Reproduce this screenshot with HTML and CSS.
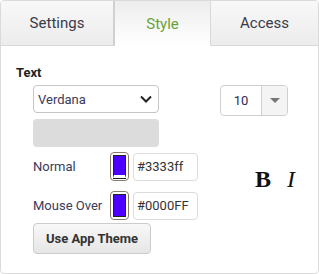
FILE: index.html
```html
<!DOCTYPE html>
<html>

<head>
    <meta charset="UTF-8">
    <link rel="stylesheet" href="styles.css">
    <title>Style</title>
</head>

<body>
    <div class="panel">
        <div class="tabs">
            <div class="tab tab-settings">Settings</div>
            <div class="tab tab-style active">Style</div>
            <div class="tab tab-access">Access</div>
        </div>
        <div class="content">
            <div class="section-title">Text</div>
            <div class="font-row">
                <div class="font-col">
                    <div class="font-select">
                        <span>Verdana</span>
                        <svg width="14" height="10" viewBox="0 0 14 10"><path d="M2 2.5 L7 7.5 L12 2.5" fill="none" stroke="#222" stroke-width="2"/></svg>
                    </div>
                    <div class="font-preview"></div>
                </div>
                <div class="size-select">
                    <span class="size-value">10</span>
                    <span class="size-arrow"><svg width="10" height="6" viewBox="0 0 10 6"><path d="M0 0 H10 L5 5 Z" fill="#777"/></svg></span>
                </div>
            </div>
            <div class="colors-row">
                <div class="colors">
                    <div class="color-row">
                        <span class="color-label">Normal</span>
                        <span class="swatch"><span class="swatch-fill with-strip"></span></span>
                        <span class="hex">#3333ff</span>
                    </div>
                    <div class="color-row">
                        <span class="color-label">Mouse Over</span>
                        <span class="swatch"><span class="swatch-fill"></span></span>
                        <span class="hex">#0000FF</span>
                    </div>
                </div>
                <div class="format">
                    <span class="fmt-bold">B</span>
                    <span class="fmt-italic">I</span>
                </div>
            </div>
            <button class="theme-button">Use App Theme</button>
        </div>
    </div>
</body>

</html>
```

FILE: styles.css
```css
*,
*::before,
*::after {
    box-sizing: border-box;
    padding: 0;
    margin: 0;
}

body {
    width: 319px;
    height: 274px;
    overflow: hidden;
    background: #fff;
    font-family: Roboto, "Liberation Sans", sans-serif;
    color: #333;
}

.panel {
    width: 319px;
    height: 274px;
    border: 1px solid #dadada;
    border-radius: 4px;
    overflow: hidden;
    display: flex;
    flex-direction: column;
}

.tabs {
    display: flex;
    height: 45px;
}

.tab {
    display: flex;
    align-items: center;
    justify-content: center;
    font-size: 15px;
    color: #3a3a4a;
    background: linear-gradient(#f8f8f8, #ececec);
    border-bottom: 1px solid #d8d8d8;
}

.tab-settings {
    width: 114px;
    border-right: 2px solid #d0d0d0;
}

.tab-style {
    width: 95px;
}

.tab-access {
    flex: 1;
    border-left: 1px solid #d8d8d8;
}

.tab.active {
    background: linear-gradient(#ededed, #ffffff);
    border-bottom: none;
    color: #6aa23a;
}

.content {
    padding: 19px 0 0 15px;
}

.section-title {
    font-size: 13px;
    font-weight: bold;
    color: #222;
    height: 15px;
    line-height: 15px;
}

.font-row {
    display: flex;
    margin-top: 5px;
    padding-left: 17px;
}

.font-col {
    display: flex;
    flex-direction: column;
    gap: 6px;
    width: 126px;
}

.font-select {
    height: 28px;
    border: 1px solid #c6c6c6;
    border-radius: 4px;
    display: flex;
    align-items: center;
    justify-content: space-between;
    padding: 0 5px 0 4px;
    font-size: 13px;
    color: #3a3a5a;
}

.font-preview {
    height: 28px;
    background: #dcdcdc;
    border-radius: 4px;
}

.size-select {
    margin-left: 61px;
    width: 68px;
    height: 31px;
    border: 1px solid #cfcfcf;
    border-radius: 4px;
    display: flex;
    overflow: hidden;
}

.size-value {
    width: 41px;
    border-right: 1px solid #cfcfcf;
    display: flex;
    align-items: center;
    justify-content: center;
    font-size: 13px;
    color: #2a2a5a;
}

.size-arrow {
    flex: 1;
    background: #f4f4f4;
    display: flex;
    align-items: center;
    justify-content: center;
}

.colors-row {
    display: flex;
    padding-left: 17px;
    margin-top: 5px;
}

.colors {
    display: flex;
    flex-direction: column;
    gap: 10px;
}

.color-row {
    display: flex;
    align-items: center;
    height: 29px;
}

.color-label {
    width: 77px;
    font-size: 13px;
    color: #3a3a5a;
}

.swatch {
    width: 19px;
    height: 29px;
    border: 1px solid #8c7a68;
    border-radius: 4px;
    padding: 2px;
    display: flex;
}

.swatch-fill {
    flex: 1;
    background: #4c00ff;
    border: 1px solid #222;
}

.swatch-fill.with-strip {
    border-bottom: 3px solid #fff;
    box-shadow: 0 1px 0 #222;
}

.hex {
    margin-left: 4px;
    width: 65px;
    height: 28px;
    border: 1px solid #dcdcdc;
    border-radius: 4px;
    display: flex;
    align-items: center;
    padding-left: 3px;
    font-size: 13px;
    color: #333;
}

.format {
    margin-left: 57px;
    margin-top: 13px;
    display: flex;
    gap: 16px;
    font-family: "Liberation Serif", serif;
    font-size: 24px;
    color: #111;
    height: 28px;
    line-height: 28px;
}

.fmt-bold {
    font-weight: bold;
}

.fmt-italic {
    font-style: italic;
}

.theme-button {
    margin: 3px 0 0 17px;
    width: 118px;
    height: 31px;
    border: 1px solid #cccccc;
    border-radius: 4px;
    background: linear-gradient(#f8f8f8, #e6e6e6);
    font-family: Roboto, "Liberation Sans", sans-serif;
    font-size: 13px;
    font-weight: bold;
    color: #333;
}
```
